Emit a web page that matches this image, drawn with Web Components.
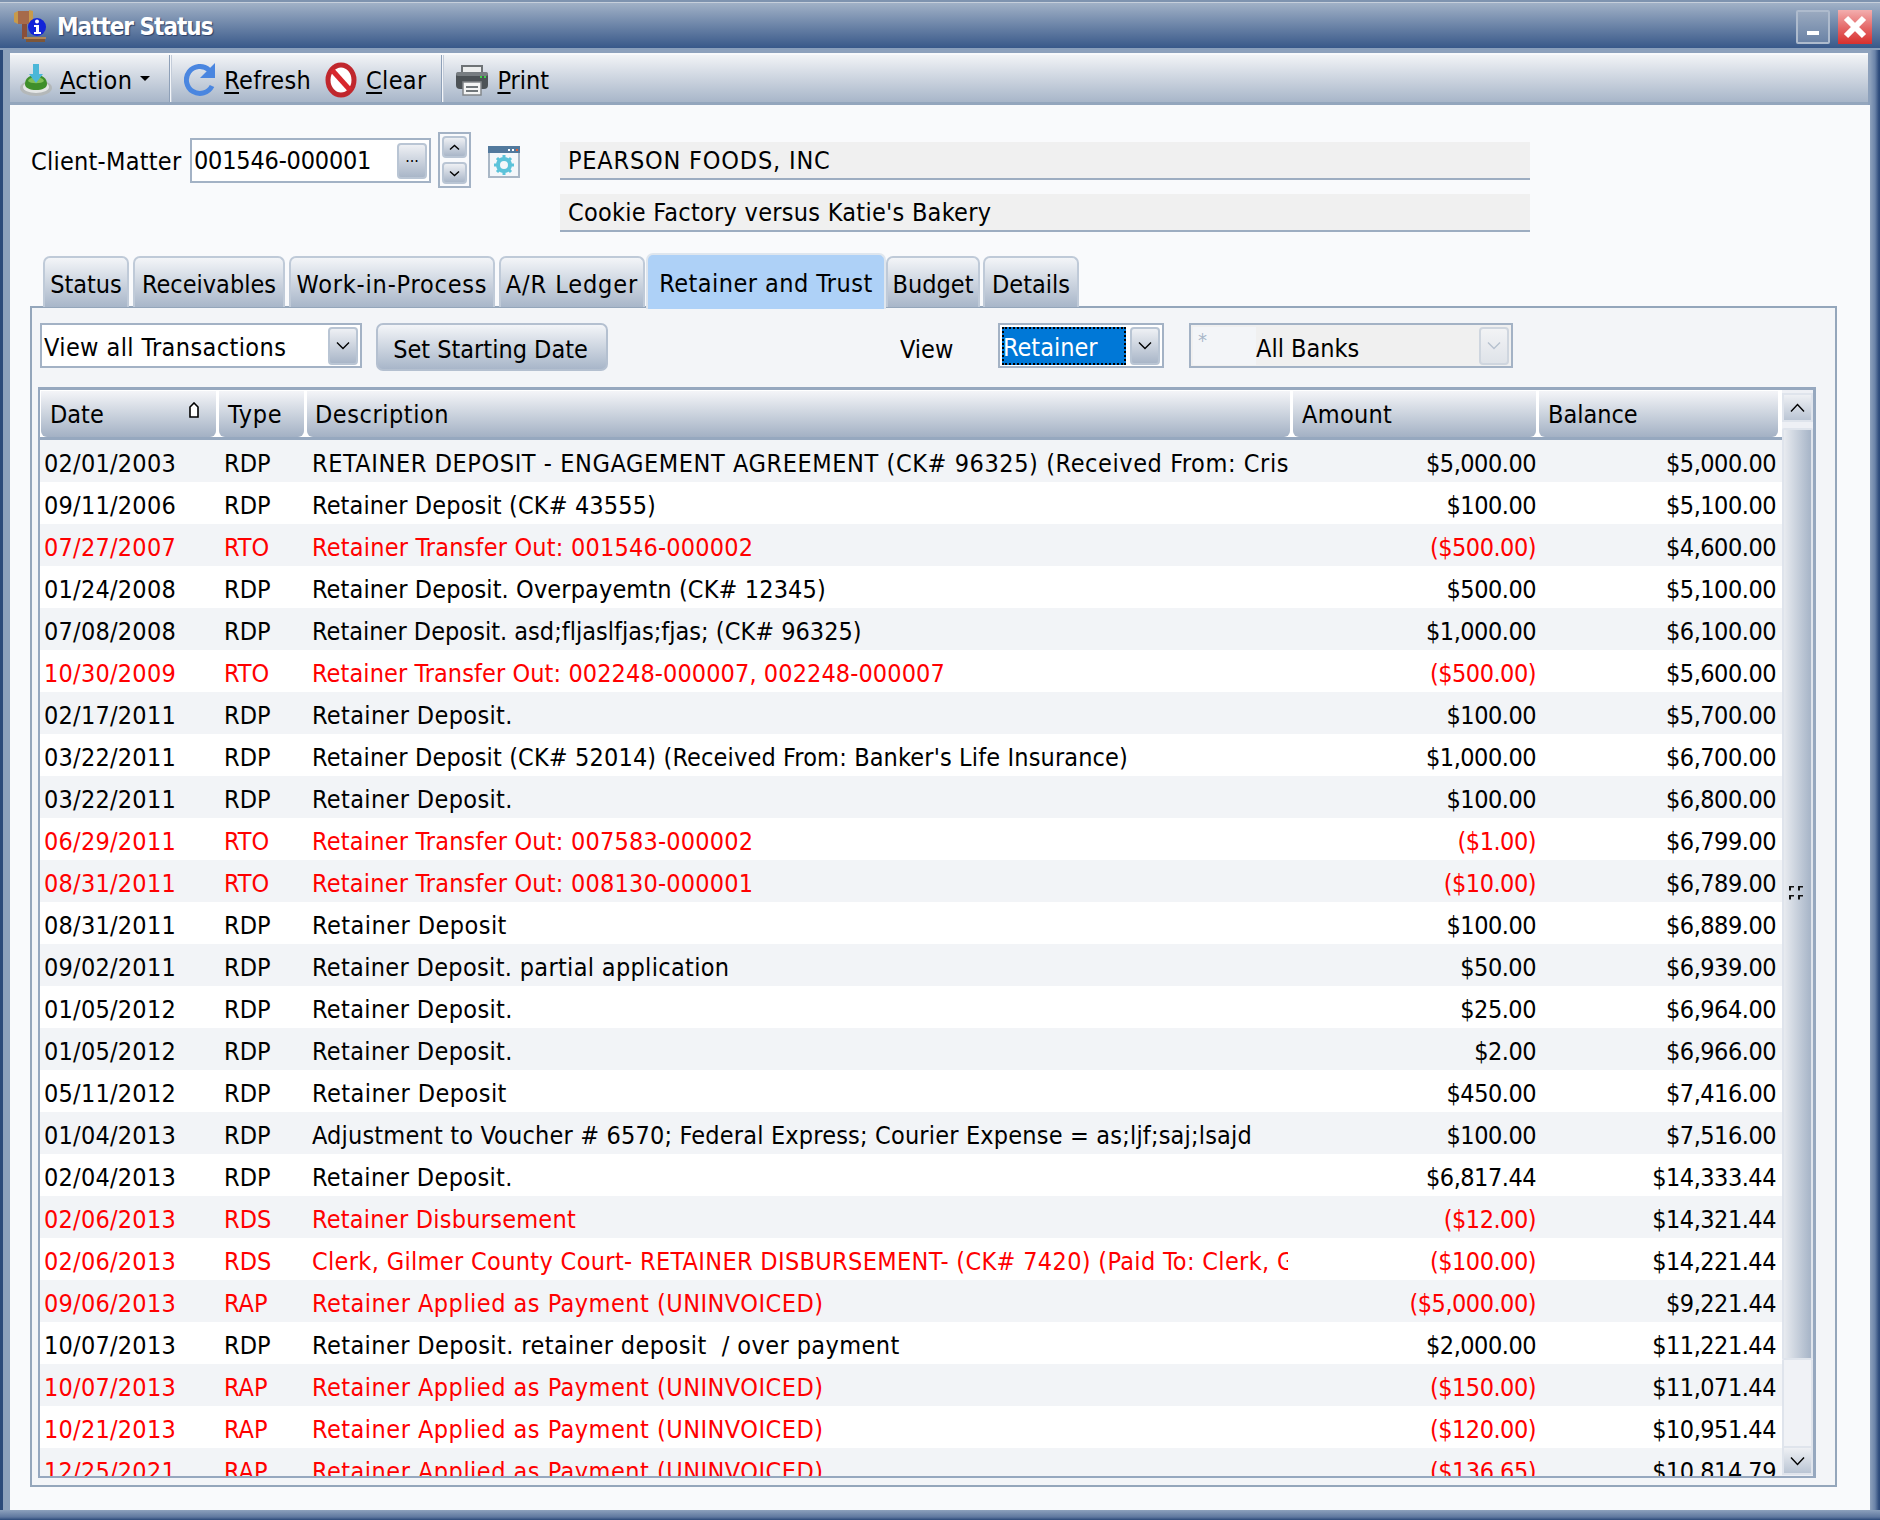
<!DOCTYPE html>
<html>
<head>
<meta charset="utf-8">
<style>
  html, body { margin: 0; padding: 0; background: #f9fafc; }
  body { font-family: "DejaVu Sans", "Liberation Sans", sans-serif; font-stretch: condensed; font-size: 25px; color: #000; }
</style>
</head>
<body>
<matter-window>
  <span slot="title">Matter Status</span>
</matter-window>

<script>
const FACE = `font-family: "DejaVu Sans", "Liberation Sans", sans-serif; font-stretch: condensed; font-size: 25px;`;
const chevron = (w, h, up) => `<svg width="${w}" height="${h}" viewBox="0 0 ${w} ${h}"><path d="${up ? `M1 ${h - 1.5}L${w / 2} 1.500 ${w - 1} ${h - 1.5}` : `M1 1.500L${w / 2} ${h - 1.5} ${w - 1} 1.500`}" fill="none" stroke="currentColor" stroke-width="1.400"/></svg>`;

const ICONS = {
  action: `<svg width="32" height="32" viewBox="0 0 32 32">
    <ellipse cx="16" cy="24" rx="16" ry="8" fill="#b4b8b9"/><ellipse cx="16" cy="23" rx="13" ry="6" fill="#e4e6e6"/>
    <path d="M5 20c0-6 5-9 11-9s11 3 11 9c0 4-5 6-11 6S5 24 5 20z" fill="#3f8f2a"/>
    <path d="M8 17c1-3 5-4 8-4s7 1 8 4c-2 3-14 3-16 0z" fill="#7fc056"/>
    <path d="M13 0h6v10h4l-7 9-7-9h4z" fill="#4bb7d8"/></svg>`,
  refresh: `<svg width="34" height="36" viewBox="0 0 34 36">
    <path d="M25 8A13.500 13.500 0 1 0 28 24" fill="none" stroke="#4a86e0" stroke-width="5"/>
    <path d="M31 1v15H16z" fill="#4a86e0"/></svg>`,
  clear: `<svg width="32" height="36" viewBox="0 0 32 36">
    <ellipse cx="16" cy="18" rx="13" ry="15" fill="#fff" stroke="#c0272d" stroke-width="5"/>
    <path d="M7 8l18 20" stroke="#d8262c" stroke-width="5"/></svg>`,
  print: `<svg width="34" height="36" viewBox="0 0 34 36">
    <path d="M7 12V4h20v8z" fill="#eceeee" stroke="#6e7376" stroke-width="2"/>
    <rect x="1" y="10" width="32" height="17" rx="4" fill="#4c5256"/>
    <rect x="1" y="10" width="32" height="4" rx="2" fill="#777d81"/>
    <rect x="25" y="14" width="2" height="2" fill="#3fd24a"/><rect x="29" y="14" width="2" height="2" fill="#3fd24a"/>
    <path d="M8 20h18v13H8z" fill="#f4f5f5" stroke="#82878a" stroke-width="1.500"/>
    <path d="M11 25h12M11 29h12" stroke="#70767a" stroke-width="2"/></svg>`,
  gear: `<svg width="32" height="32" viewBox="0 0 32 32">
    <rect x="1" y="1" width="30" height="30" fill="#f4f7fa" stroke="#a9b7c6" stroke-width="2"/>
    <rect x="0" y="0" width="32" height="7" fill="#52799d"/>
    <rect x="20" y="3" width="2" height="2" fill="#fff"/><rect x="24" y="3" width="2" height="2" fill="#fff"/><rect x="28" y="3" width="2" height="2" fill="#e2603a"/>
    <circle cx="16" cy="19" r="6" fill="none" stroke="#5cc3da" stroke-width="4"/>
    <path d="M16 9v20M6 19h20M9 12l14 14M23 12L9 26" stroke="#5cc3da" stroke-width="3" stroke-dasharray="3 14"/></svg>`,
  gavel: `<svg width="34" height="34" viewBox="0 0 34 34">
    <path d="M0 3l4-2v13l-4-2z" fill="#c89a4a"/>
    <path d="M4 1h12v13H4z" fill="#a66a4a"/><path d="M15 0l4 1v12l-4 1z" fill="#c89a4a"/>
    <rect x="8" y="14" width="5" height="15" fill="#8a4f3a"/>
    <path d="M10 27h22v2H10z" fill="#b08658"/><path d="M12 29h19v3H12z" fill="#7e5638"/>
    <circle cx="23" cy="17" r="9" fill="#1224d8"/>
    <circle cx="23" cy="11.500" r="2" fill="#fff"/><path d="M20 15h5v7h2v2h-7v-2h2v-5h-2z" fill="#fff"/></svg>`
};

class TitleBar extends HTMLElement {
  constructor() {
    super();
    this.attachShadow({ mode: 'open' }).innerHTML = `
    <style>
      :host { display: flex; align-items: center; height: 50px; flex: none; box-sizing: border-box;
        border-top: 2px solid #7e93af; padding: 1px 8px 0 14px; gap: 9px;
        background: linear-gradient(#a3b3c8, #385889 96%, #8a9fbb 96%); box-shadow: inset 0 1px #c6cfdb; }
      .name { flex: 1; ${FACE} font-size: 24px; font-weight: bold; letter-spacing: -1px; color: #fff; text-shadow: 1px 1px 1px #2a3f66; }
      .wbtn { width: 34px; height: 34px; box-sizing: border-box; display: flex; align-items: center; justify-content: center; }
      .min { border: 2px solid #aebbcd; border-radius: 2px; background: linear-gradient(#99a9bf, #6b83a6); align-items: flex-end; padding: 0 0 7px 0; }
      .min i { display: block; width: 12px; height: 4px; background: #fff; margin-top: 1px; }
      .close { background: linear-gradient(#f3aeae, #e25e5e 60%, #d82f2d); margin-left: -1px; }
    </style>
    ${ICONS.gavel}
    <span class="name"><slot></slot></span>
    <div class="wbtn min"><i></i></div>
    <div class="wbtn close"><svg width="24" height="24" viewBox="0 0 24 24"><path d="M3 3l18 18M21 3L3 21" stroke="#fff" stroke-width="6"/></svg></div>`;
  }
}
customElements.define('title-bar', TitleBar);

class ToolButton extends HTMLElement {
  constructor() {
    super();
    this.attachShadow({ mode: 'open' }).innerHTML = `
    <style>
      :host { display: flex; align-items: center; gap: 8px; ${FACE} letter-spacing: .3px; padding-top: 3px; }
      svg { display: block; flex: none; }
      .caret { width: 0; height: 0; border: 5px solid transparent; border-top: 5px solid #000; border-bottom: 0; margin-top: -4px; }
    </style>
    ${ICONS[this.getAttribute('icon')]}
    <span><slot></slot></span>
    ${this.hasAttribute('menu') ? '<i class="caret"></i>' : ''}`;
  }
}
customElements.define('tool-button', ToolButton);

class ToolStrip extends HTMLElement {
  constructor() {
    super();
    this.attachShadow({ mode: 'open' }).innerHTML = `
    <style>
      :host { display: flex; align-items: center; height: 52px; flex: none; box-sizing: border-box;
        margin: 3px 2px 0 0; border-top: 2px solid #f8f9fb; border-bottom: 3px solid #94a6bd;
        background: linear-gradient(#f1f3f6, #a8b6c9); color: #000; }
    </style>
    <slot></slot>`;
  }
}
customElements.define('tool-strip', ToolStrip);

class ToolSep extends HTMLElement {
  constructor() {
    super();
    this.attachShadow({ mode: 'open' }).innerHTML = `
    <style>:host { display: block; align-self: stretch; width: 3px; background: linear-gradient(90deg, #8ea0b8 33%, #f4f6f9 33%, #f4f6f9 66%, #c3ccd9 66%); }</style>`;
  }
}
customElements.define('tool-sep', ToolSep);

class SmallBtn extends HTMLElement {
  constructor() {
    super();
    this.attachShadow({ mode: 'open' }).innerHTML = `
    <style>
      :host { display: flex; align-items: center; justify-content: center; box-sizing: border-box; flex: none; color: #000;
        border: 2px solid #b9c5d4; border-radius: 4px; background: linear-gradient(#eef0f4, #a9b6c8); }
      :host([disabled]) { color: #b6c1cf; background: linear-gradient(#f2f3f5, #dfe3e9); border-color: #cfd6df; }
    </style>
    <slot></slot>`;
  }
}
customElements.define('small-btn', SmallBtn);

class ClientPicker extends HTMLElement {
  constructor() {
    super();
    this.attachShadow({ mode: 'open' }).innerHTML = `
    <style>
      :host { display: flex; align-items: flex-start; flex: none; padding: 27px 0 0 21px; ${FACE} }
      .label { height: 45px; line-height: 47px; width: 159px; flex: none; letter-spacing: .25px; }
      .label, .input { margin-top: 6px; }
      .input { width: 241px; height: 45px; box-sizing: border-box; border: 2px solid #a3b2c5; background: #fff;
        display: flex; align-items: center; padding: 0 2px 0 2px; flex: none; }
      .input span { flex: 1; letter-spacing: -.2px; line-height: 45px; }
      .dots { width: 30px; height: 36px; font-size: 16px; line-height: 1; padding-bottom: 8px; }
      .spin { margin-left: 7px; width: 33px; height: 56px; box-sizing: border-box; border: 2px solid #a3b2c5;
        display: flex; flex-direction: column; justify-content: space-between; padding: 2px; flex: none; }
      .spin small-btn { height: 22px; }
      .gear { margin: 14px 40px 0 17px; flex: none; }
      .names { display: flex; flex-direction: column; gap: 14px; margin-top: 10px; width: 970px; flex: none; }
      .names div { height: 38px; box-sizing: border-box; line-height: 38px; padding-left: 8px; background: #f0f0f0; border-bottom: 2px solid #9dadc1; }
    </style>
    <div class="label">Client-Matter</div>
    <div class="input"><span>001546-000001</span><small-btn class="dots">...</small-btn></div>
    <div class="spin"><small-btn>${chevron(11, 7, true)}</small-btn><small-btn>${chevron(11, 7)}</small-btn></div>
    <div class="gear">${ICONS.gear}</div>
    <div class="names"><div style="letter-spacing:.8px">PEARSON FOODS, INC</div><div style="letter-spacing:.27px">Cookie Factory versus Katie's Bakery</div></div>`;
  }
}
customElements.define('client-picker', ClientPicker);

class TabItem extends HTMLElement {
  constructor() {
    super();
    this.attachShadow({ mode: 'open' }).innerHTML = `
    <style>
      :host { display: flex; align-items: center; justify-content: center; box-sizing: border-box; height: 51px; flex: none;
        border: 2px solid #bfcad8; border-bottom: 0; border-radius: 7px 7px 0 0; padding-top: 4px; ${FACE}
        background: linear-gradient(#f3f5f8, #a8b6c9); white-space: nowrap; }
      :host([active]) { height: 56px; background: #aed1f7; border-color: #dfe6ee; padding-top: 3px; margin-bottom: -2px; position: relative; z-index: 1; }
    </style>
    <slot></slot>`;
  }
}
customElements.define('tab-item', TabItem);

class TabStrip extends HTMLElement {
  constructor() {
    super();
    this.attachShadow({ mode: 'open' }).innerHTML = `
    <style>
      :host { display: flex; align-items: flex-end; padding-left: 13px; height: 54px; margin-top: 21px; flex: none; margin-bottom: -1px; position: relative; }
    </style>
    <slot></slot>`;
  }
}
customElements.define('tab-strip', TabStrip);

class ComboBox extends HTMLElement {
  constructor() {
    super();
    this.attachShadow({ mode: 'open' }).innerHTML = `
    <style>
      :host { display: flex; align-items: center; box-sizing: border-box; height: 45px; flex: none; border: 2px solid #a3b2c5; background: #fff; padding: 0 2px; white-space: nowrap; }
      :host([disabled]) { background: #f0f0f0; }
      .val { flex: 1; min-width: 0; height: 38px; line-height: 41px; display: flex; }
      :host([focused]) .val { background: #0078d7; color: #fff; outline: 2px dotted #000; outline-offset: -2px; margin-right: 4px; padding-left: 1px; }
      small-btn { width: 30px; height: 38px; }
    </style>
    <div class="val"><slot></slot></div>
    <small-btn ${this.hasAttribute('disabled') ? 'disabled' : ''}>${chevron(14, 9)}</small-btn>`;
  }
}
customElements.define('combo-box', ComboBox);

class PushButton extends HTMLElement {
  constructor() {
    super();
    this.attachShadow({ mode: 'open' }).innerHTML = `
    <style>
      :host { display: flex; align-items: center; justify-content: center; box-sizing: border-box; height: 48px; flex: none; padding: 4px 3px 0 0;
        border: 2px solid #b4c0d0; border-radius: 7px; background: linear-gradient(#f3f5f8, #a8b6c9); }
    </style>
    <slot></slot>`;
  }
}
customElements.define('push-button', PushButton);

// rows of the grid share these tracks with the header
const TRACKS = 'grid-template-columns: 178px 88px 986px 246px 242px;';

class LedgerRow extends HTMLElement {
  connectedCallback() {
    if (this.shadowRoot) return;
    const a = (n) => this.getAttribute(n);
    const out = a('type') !== 'RDP';
    this.attachShadow({ mode: 'open' }).innerHTML = `
    <style>
      :host { display: grid; ${TRACKS} height: 42px; line-height: 47px; flex: none; white-space: nowrap; background: #fff; ${FACE} }
      :host(:nth-child(odd)) { background: #f2f4f7; }
      div { overflow: hidden; min-width: 0; box-sizing: border-box; }
      .red { color: #ff0000; }
      .date { padding-left: 4px; letter-spacing: .24px; } .type { padding-left: 6px; } .desc { padding-left: 6px; margin-right: 4px; letter-spacing: ${a('track')}px; }
      .amt { text-align: right; padding-right: 2px; letter-spacing: -.5px; } .bal { text-align: right; padding-right: 4px; letter-spacing: -.5px; }
    </style>
    <div class="date ${out ? 'red' : ''}">${a('date')}</div>
    <div class="type ${out ? 'red' : ''}">${a('type')}</div>
    <div class="desc ${out ? 'red' : ''}">${a('desc')}</div>
    <div class="amt ${out ? 'red' : ''}">${a('amount')}</div>
    <div class="bal">${a('balance')}</div>`;
  }
}
customElements.define('ledger-row', LedgerRow);

class ScrollBar extends HTMLElement {
  constructor() {
    super();
    this.attachShadow({ mode: 'open' }).innerHTML = `
    <style>
      :host { display: flex; flex-direction: column; width: 31px; flex: none; background: #eef0f5; box-sizing: border-box; padding-top: 3px; padding-bottom: 1px; }
      .end { height: 29px; flex: none; display: flex; align-items: center; justify-content: center; box-sizing: border-box; color: #000;
        border: 2px solid #dfe4ec; background: linear-gradient(#eef0f4, #bac5d4); }
      .thumb { margin-top: 6px; height: 932px; flex: none; display: flex; align-items: center; justify-content: center; box-sizing: border-box;
        border: 2px solid #dfe4ec; border-radius: 2px; background: linear-gradient(90deg, #e8ebf0, #a6b4c7); }
      .track { flex: 1; border: 2px solid #dfe4ec; border-width: 0 2px; background: #f0f2f6; }
      .grip { display: grid; grid-template-columns: 5px 5px; gap: 4px; margin: -3px 0 0 -3px; }
      .grip i { width: 5px; height: 5px; background: #111; display: block; clip-path: polygon(0 0, 100% 0, 100% 40%, 40% 40%, 40% 100%, 0 100%); }
    </style>
    <div class="end">${chevron(15, 10, true)}</div>
    <div class="thumb"><div class="grip"><i></i><i></i><i></i><i></i></div></div>
    <div class="track"></div>
    <div class="end">${chevron(15, 10)}</div>`;
  }
}
customElements.define('scroll-bar', ScrollBar);

class LedgerGrid extends HTMLElement {
  constructor() {
    super();
    this.attachShadow({ mode: 'open' }).innerHTML = `
    <style>
      :host { display: flex; flex: 1; min-height: 0; box-sizing: border-box; border: 2px solid #96a8bf; border-right-width: 3px; border-top-width: 3px; background: #fff; ${FACE} }
      .main { flex: 1; min-width: 0; display: flex; flex-direction: column; padding-top: 1px; }
      .head { display: grid; ${TRACKS} height: 46px; flex: none; border-bottom: 3px solid #96a8bf; box-sizing: content-box; padding-bottom: 0; }
      .cell { margin: 0 2px 0 1px; border-radius: 0 0 6px 6px; background: linear-gradient(#f4f5f8, #a3b1c4);
        display: flex; align-items: center; justify-content: space-between; padding: 0 17px 0 9px; box-sizing: border-box; }
      .cell svg { margin-top: -8px; }
      .body { flex: 1; min-height: 0; overflow: hidden; display: flex; flex-direction: column; }
    </style>
    <div class="main">
      <div class="head">
        <div class="cell">Date<svg width="10" height="16" viewBox="0 0 10 16"><path d="M1 15V5l4-4 4 4v10z" fill="#fff" stroke="#000" stroke-width="1.600"/></svg></div>
        <div class="cell" style="letter-spacing:.8px">Type</div>
        <div class="cell" style="letter-spacing:.55px;padding-left:8px">Description</div>
        <div class="cell" style="letter-spacing:.3px">Amount</div>
        <div class="cell">Balance</div>
      </div>
      <div class="body"><slot></slot></div>
    </div>
    <scroll-bar></scroll-bar>`;
  }
}
customElements.define('ledger-grid', LedgerGrid);

class TrustPanel extends HTMLElement {
  constructor() {
    super();
    this.attachShadow({ mode: 'open' }).innerHTML = `
    <style>
      :host { display: flex; flex-direction: column; flex: 1; min-height: 0; box-sizing: border-box; border: 2px solid #94a6bb; background: #f3f5f8; padding: 15px 19px 7px 6px; ${FACE} }
      .filters { display: flex; align-items: flex-start; height: 48px; flex: none; margin-bottom: 16px; padding-left: 2px; }
      .view { height: 45px; line-height: 53px; margin-left: 292px; width: 98px; flex: none; }
    </style>
    <div class="filters">
      <combo-box style="width:322px;letter-spacing:.4px">View all Transactions</combo-box>
      <push-button style="width:232px;margin-left:14px">Set Starting Date</push-button>
      <div class="view">View</div>
      <combo-box style="width:166px" focused>Retainer</combo-box>
      <combo-box style="width:324px;margin-left:25px" disabled><span style="color:#a9b7c9;width:63px;padding-left:5px;box-sizing:border-box;font-size:20px;line-height:26px;background:#f3f5f8;height:38px">*</span><span style="line-height:43px">All Banks</span></combo-box>
    </div>
    <slot></slot>`;
  }
}
customElements.define('trust-panel', TrustPanel);

// last value: letter-spacing of the description, tuned per row
const LEDGER = [
  ['02/01/2003','RDP','RETAINER DEPOSIT - ENGAGEMENT AGREEMENT (CK# 96325) (Received From: Cris','$5,000.00','$5,000.00',.58],
  ['09/11/2006','RDP','Retainer Deposit (CK# 43555)','$100.00','$5,100.00',.13],
  ['07/27/2007','RTO','Retainer Transfer Out: 001546-000002','($500.00)','$4,600.00',.2],
  ['01/24/2008','RDP','Retainer Deposit. Overpayemtn (CK# 12345)','$500.00','$5,100.00',.12],
  ['07/08/2008','RDP','Retainer Deposit. asd;fljaslfjas;fjas; (CK# 96325)','$1,000.00','$6,100.00',.02],
  ['10/30/2009','RTO','Retainer Transfer Out: 002248-000007, 002248-000007','($500.00)','$5,600.00',.09],
  ['02/17/2011','RDP','Retainer Deposit.','$100.00','$5,700.00',.35],
  ['03/22/2011','RDP',"Retainer Deposit (CK# 52014) (Received From: Banker's Life Insurance)",'$1,000.00','$6,700.00',.14],
  ['03/22/2011','RDP','Retainer Deposit.','$100.00','$6,800.00',.35],
  ['06/29/2011','RTO','Retainer Transfer Out: 007583-000002','($1.00)','$6,799.00',.2],
  ['08/31/2011','RTO','Retainer Transfer Out: 008130-000001','($10.00)','$6,789.00',.2],
  ['08/31/2011','RDP','Retainer Deposit','$100.00','$6,889.00',.45],
  ['09/02/2011','RDP','Retainer Deposit. partial application','$50.00','$6,939.00',.32],
  ['01/05/2012','RDP','Retainer Deposit.','$25.00','$6,964.00',.35],
  ['01/05/2012','RDP','Retainer Deposit.','$2.00','$6,966.00',.35],
  ['05/11/2012','RDP','Retainer Deposit','$450.00','$7,416.00',.45],
  ['01/04/2013','RDP','Adjustment to Voucher # 6570; Federal Express; Courier Expense = as;ljf;saj;lsajd','$100.00','$7,516.00',.18],
  ['02/04/2013','RDP','Retainer Deposit.','$6,817.44','$14,333.44',.35],
  ['02/06/2013','RDS','Retainer Disbursement','($12.00)','$14,321.44',.23],
  ['02/06/2013','RDS','Clerk, Gilmer County Court- RETAINER DISBURSEMENT- (CK# 7420) (Paid To: Clerk, G','($100.00)','$14,221.44',.33],
  ['09/06/2013','RAP','Retainer Applied as Payment (UNINVOICED)','($5,000.00)','$9,221.44',.48],
  ['10/07/2013','RDP','Retainer Deposit. retainer deposit&nbsp; / over payment','$2,000.00','$11,221.44',.41],
  ['10/07/2013','RAP','Retainer Applied as Payment (UNINVOICED)','($150.00)','$11,071.44',.48],
  ['10/21/2013','RAP','Retainer Applied as Payment (UNINVOICED)','($120.00)','$10,951.44',.48],
  ['12/25/2021','RAP','Retainer Applied as Payment (UNINVOICED)','($136.65)','$10,814.79',.48]
];

class MatterWindow extends HTMLElement {
  constructor() {
    super();
    const root = this.attachShadow({ mode: 'open' });
    root.innerHTML = `
    <style>
      :host { display: flex; flex-direction: column; width: 1880px; height: 1520px; box-sizing: border-box; padding: 0 10px 10px 10px; overflow: hidden; ${FACE}
        background: linear-gradient(90deg, #2c4a7a 0, #2c4a7a 3px, #8da1bc 3px, #8da1bc 10px, #8da1bc 1870px, #6a83a8 1875px, #2c4a7a 1879px); position: relative; }
      .band { position: absolute; left: 0; right: 0; bottom: 0; height: 10px; background: linear-gradient(#8da1bc, #5f789f 70%, #2c4a7a); }
      title-bar { margin: 0 -10px; }
      .content { flex: 1; min-height: 0; display: flex; flex-direction: column; background: #f9fafc; }
      .tabwrap { flex: 1; min-height: 0; display: flex; flex-direction: column; padding: 0 33px 23px 20px; }
      tab-item { margin-right: 4px; }
      u { text-decoration-thickness: 2px; text-underline-offset: 3px; }
    </style>
    <title-bar><slot name="title"></slot></title-bar>
    <tool-strip>
      <tool-button icon="action" menu style="margin-left:10px"><u>A</u>ction</tool-button>
      <tool-sep style="margin-left:19px"></tool-sep>
      <tool-button icon="refresh" style="margin-left:12px;gap:6px"><u>R</u>efresh</tool-button>
      <tool-button icon="clear" style="margin-left:14px;gap:9px"><u>C</u>lear</tool-button>
      <tool-sep style="margin-left:15px"></tool-sep>
      <tool-button icon="print" style="margin-left:11px;letter-spacing:0"><u>P</u>rint</tool-button>
    </tool-strip>
    <div class="content">
      <client-picker></client-picker>
      <div class="tabwrap">
        <tab-strip>
          <tab-item style="width:86px">Status</tab-item>
          <tab-item style="width:152px">Receivables</tab-item>
          <tab-item style="width:206px;letter-spacing:.8px">Work-in-Process</tab-item>
          <tab-item style="width:146px;margin-right:1px;letter-spacing:.9px">A/R Ledger</tab-item>
          <tab-item active style="width:240px;letter-spacing:.45px;margin-right:0">Retainer and Trust</tab-item>
          <tab-item style="width:94px;margin-right:3px">Budget</tab-item>
          <tab-item style="width:96px">Details</tab-item>
        </tab-strip>
        <trust-panel><ledger-grid id="grid"></ledger-grid></trust-panel>
      </div>
    </div>
    <div class="band"></div>`;
    const grid = root.getElementById('grid');
    for (const [date, type, desc, amount, balance, track] of LEDGER) {
      const row = document.createElement('ledger-row');
      row.setAttribute('date', date);
      row.setAttribute('type', type);
      row.setAttribute('desc', desc);
      row.setAttribute('amount', amount);
      row.setAttribute('balance', balance);
      row.setAttribute('track', track);
      grid.appendChild(row);
    }
  }
}
customElements.define('matter-window', MatterWindow);
</script>
</body>
</html>
